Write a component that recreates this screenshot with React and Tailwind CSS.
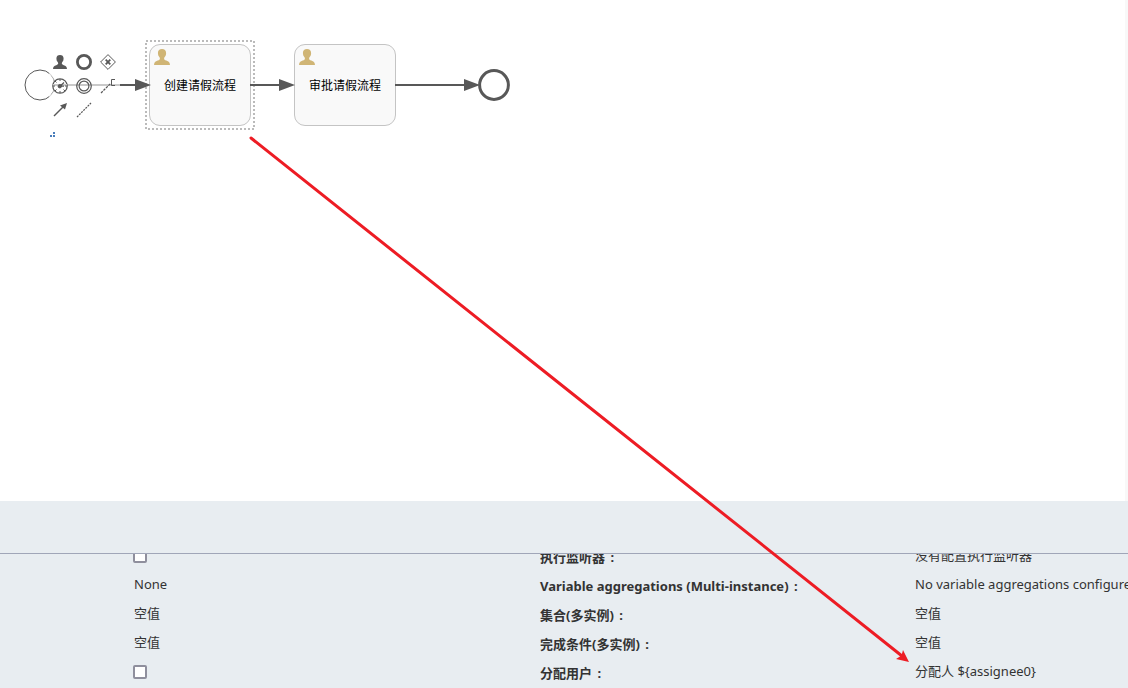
const tasks = [
  { id: "create", name: "创建请假流程", place: "left-[149px] top-11", selected: true },
  { id: "approve", name: "审批请假流程", place: "left-[294px] top-11", selected: false },
];

const rows = [
  { id: "multi", type: "checkbox", label: "执行监听器", value: "没有配置执行监听器" },
  {
    id: "aggregations",
    left: "None",
    label: "Variable aggregations (Multi-instance)",
    value: "No variable aggregations configured",
  },
  { id: "collection", left: "空值", label: "集合(多实例)", value: "空值" },
  { id: "completion", left: "空值", label: "完成条件(多实例)", value: "空值" },
  { id: "assignment", type: "checkbox", label: "分配用户", value: "分配人 ${assignee0}" },
];

const UserIcon = ({ className }) => (
  <svg viewBox="0 0 16 16" className={className} fill="currentColor">
    <path d="M8 0C5.500 0 3.900 1.300 3.900 3.900c0 1.600.4 2.900 1.200 3.900.5.600.8 1 .8 1.700 0 1.100-.7 1.600-2.200 2.100C1.300 12.400.2 13.300 0 16h16c-.2-2.700-1.300-3.600-3.700-4.400-1.500-.5-2.200-1-2.200-2.100 0-.7.3-1.100.8-1.700.8-1 1.200-2.300 1.200-3.900C12.100 1.300 10.500 0 8 0z" />
  </svg>
);

const Connections = () => (
  <svg className="absolute left-0 top-0 h-40 w-[540px]" viewBox="0 0 540 160" fill="none">
    <circle cx="40" cy="85" r="15" stroke="#585858" />
    <path d="M50 72a15 15 0 0 1 0 26" stroke="#fff" strokeWidth="5" opacity="0.7" />
    <path d="M55 85H120" stroke="#c9c9c9" strokeWidth="2" />
    <path d="M120 85H136M250 85H281M395 85H466" stroke="#585858" strokeWidth="2" />
    <path
      d="M135 79L151 85L135 91ZM279 79L295 85L279 91ZM464 79L480 85L464 91Z"
      fill="#585858"
    />
    <circle cx="494" cy="85" r="14.400" stroke="#585858" strokeWidth="3" />
  </svg>
);

const Task = ({ name, place, selected }) => (
  <div
    className={`absolute flex h-[82px] w-[102px] items-center justify-center rounded-[11px] border border-[#c4c4c4] bg-[#f9f9f9] text-xs text-black ${place}`}
  >
    <UserIcon className="absolute left-1 top-1 size-4 text-[#d0b575]" />
    {selected && (
      <svg className="absolute -left-[5px] -top-[5px] h-[90px] w-[110px]" fill="none">
        <rect x="1" y="1" width="108" height="88" stroke="#bbb" strokeWidth="2" strokeDasharray="2 2" />
      </svg>
    )}
    <span className="pt-0.5">{name}</span>
  </div>
);

const iconProps = { viewBox: "0 0 16 16", className: "size-4", fill: "none", stroke: "currentColor" };

const quickActions = [
  { label: "User task", icon: <UserIcon className="size-[14px]" /> },
  {
    label: "End event",
    icon: (
      <svg {...iconProps}>
        <circle cx="8" cy="8" r="6.600" strokeWidth="2.800" />
      </svg>
    ),
  },
  {
    label: "Exclusive gateway",
    icon: (
      <svg {...iconProps}>
        <path d="M8 .6L15.400 8L8 15.400L.6 8Z" />
        <path d="M5.700 5.700L10.300 10.300M10.300 5.700L5.700 10.300" strokeWidth="1.800" />
      </svg>
    ),
  },
  {
    label: "Timer event",
    icon: (
      <svg {...iconProps}>
        <circle cx="8" cy="8" r="7.200" strokeWidth="1.300" fill="#fff" />
        <path d="M1 7H15" stroke="#c9c9c9" strokeWidth="2" />
        <path d="M8 1V3M8 13V15M1 8H3M13 8H15M3 3L4.500 4.500M3 13L4.500 11.500M13 13L11.500 11.500" />
        <path d="M12 4.500L8 8.200H12" strokeWidth="1.200" />
        <circle cx="7.800" cy="8.200" r="1.700" fill="currentColor" />
      </svg>
    ),
  },
  {
    label: "Intermediate event",
    icon: (
      <svg {...iconProps}>
        <circle cx="8" cy="8" r="7.300" strokeWidth="1.200" />
        <circle cx="8" cy="8" r="4.900" strokeWidth="1.200" />
      </svg>
    ),
  },
  {
    label: "Text annotation",
    icon: (
      <svg {...iconProps}>
        <path d="M1 15L10.500 5.500" strokeWidth="1.200" strokeDasharray="2.500 1" />
        <path d="M15 1.500H11.500V7.500H15" />
      </svg>
    ),
  },
  {
    label: "Connect",
    icon: (
      <svg {...iconProps}>
        <path d="M2 14L11 5" strokeWidth="1.500" />
        <path d="M15 1L13 7.500L8 3.500Z" fill="currentColor" stroke="none" />
      </svg>
    ),
  },
  {
    label: "Association",
    icon: (
      <svg {...iconProps}>
        <path d="M1 15L15 1" strokeWidth="1.200" strokeDasharray="2 1" />
      </svg>
    ),
  },
];

const QuickMenu = () => (
  <div className="absolute left-12 top-[50px] grid grid-cols-3 text-[#585858]">
    {quickActions.map((action) => (
      <button
        key={action.label}
        type="button"
        aria-label={action.label}
        className="flex size-6 items-center justify-center"
      >
        {action.icon}
      </button>
    ))}
  </div>
);

const Canvas = () => (
  <main className="relative min-h-0 flex-1 border-r-3 border-[#f8f8f8] bg-white">
    {tasks.map((task) => (
      <Task key={task.id} {...task} />
    ))}
    <Connections />
    <QuickMenu />
    <svg className="absolute left-[50px] top-[132px] size-[5px]" viewBox="0 0 5 5" fill="#4a7ebb">
      <path d="M0 3h2v2H0zM3 3h2v2H3zM3 0h2v2H3z" />
    </svg>
  </main>
);

const PropertyRow = ({ id, type, left, label, value }) => (
  <div className="grid h-[29px] grid-cols-[minmax(0,406fr)_minmax(0,375fr)_minmax(0,213fr)] pl-[134px] whitespace-nowrap">
    <div className="pt-1">
      {type === "checkbox" ? (
        <input
          id={id}
          type="checkbox"
          aria-label={label}
          className="-ml-px mt-[3px] block size-[14px] appearance-none rounded-xs border-2 border-[#8f8f9d] bg-white"
        />
      ) : (
        left
      )}
    </div>
    <div className="pt-[6px] font-bold">
      {label} <span className="ml-0.5">:</span>
    </div>
    <div className="pt-1">{value}</div>
  </div>
);

const Properties = () => (
  <section className="bg-[#e8edf1] text-[13px] leading-[18px] text-[#333]">
    <div className="box-content h-[52px] border-b border-[#a0a6b8]" />
    <div className="h-[134px] overflow-hidden">
      <div className="-mt-3">
        {rows.map((row) => (
          <PropertyRow key={row.id} {...row} />
        ))}
      </div>
    </div>
  </section>
);

const App = () => {
  return (
    <div className="relative flex h-screen flex-col overflow-hidden font-['Noto_Sans','Noto_Sans_CJK_SC',sans-serif]">
      <Canvas />
      <Properties />
      <svg
        className="pointer-events-none absolute left-[249px] top-[136px] h-[527px] w-[661px]"
        viewBox="249 136 661 527"
        fill="none"
      >
        <path d="M251 138L902 656" stroke="#ed1c24" strokeWidth="3" strokeLinecap="round" />
        <path d="M909 662L903 650L901.500 655.500L896 659Z" fill="#ed1c24" />
      </svg>
    </div>
  );
};

export default App;
